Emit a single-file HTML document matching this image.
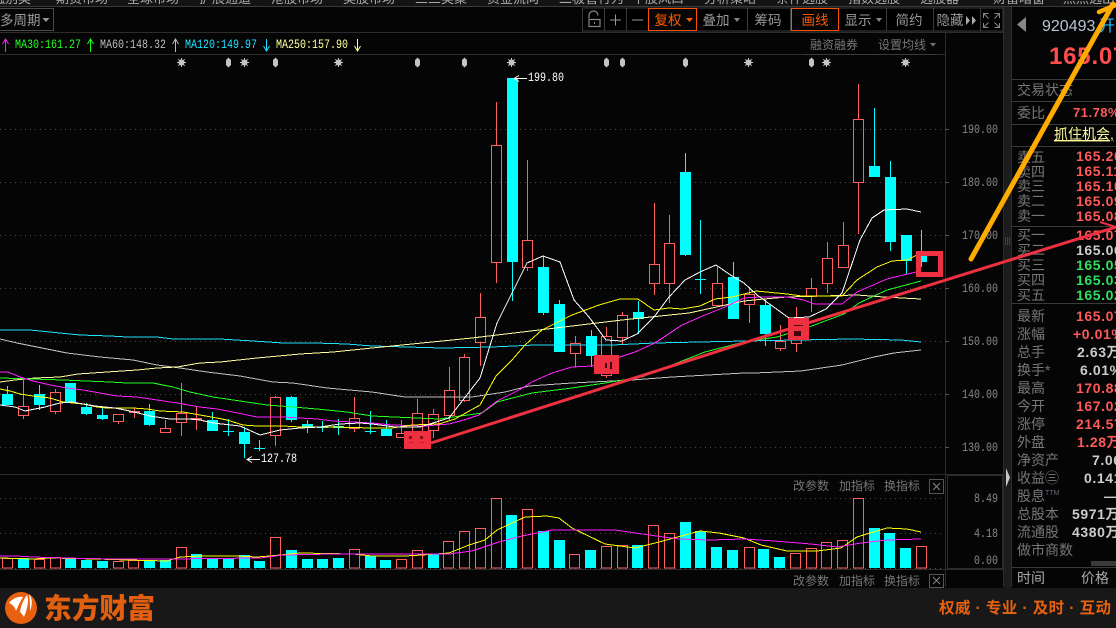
<!DOCTYPE html>
<html lang="zh"><head><meta charset="utf-8"><title>K线</title>
<style>
html,body{margin:0;padding:0;background:#050505;width:1116px;height:628px;overflow:hidden}
svg{display:block}
text{font-family:"Liberation Sans","Noto Sans CJK SC",sans-serif;fill:#888}
.m{font-family:"Liberation Mono","Noto Sans CJK SC",monospace;font-size:13px}
.c{font-size:12px;fill:#777}
.b{font-size:13.5px;fill:#999;text-anchor:middle}
.l{font-size:14px;fill:#777}
.v{font-size:14px;font-weight:bold;fill:#ff5a5a;letter-spacing:.6px}
.w{fill:#ccc}.g{fill:#2fe060}
.t{font-size:13px;fill:#aaa}
.ln{fill:none;stroke-width:1;shape-rendering:crispEdges}
.sep{stroke:#2c2c2c;stroke-width:1;shape-rendering:crispEdges}
.sep2{stroke:#3a3a3a;stroke-width:1;shape-rendering:crispEdges}
.grid{stroke:#4a4a4a;stroke-width:1;stroke-dasharray:1 4;shape-rendering:crispEdges}
</style></head><body>
<svg width="1116" height="628" viewBox="0 0 1116 628" xmlns="http://www.w3.org/2000/svg">
<rect width="1116" height="628" fill="#050505"/>
<!-- top menu strip -->
<rect width="1116" height="6" fill="#141414"/>
<g class="t">
<text x="-8" y="3" class="t">融别类</text><text x="56" y="3" class="t">期货市场</text><text x="127" y="3" class="t">全球市场</text><text x="199" y="3" class="t">扩展通道</text><text x="271" y="3" class="t">港股市场</text><text x="343" y="3" class="t">美股市场</text><text x="415" y="3" class="t">三三类聚</text><text x="487" y="3" class="t">资金流向</text><text x="559" y="3" class="t">二极管行为</text><text x="632" y="3" class="t">个股风口</text><text x="704" y="3" class="t">分析策略</text><text x="776" y="3" class="t">条件选股</text><text x="848" y="3" class="t">指数选股</text><text x="920" y="3" class="t">选股器</text><text x="993" y="3" class="t">财富暗窗</text><text x="1063" y="3" class="t">点点选出</text>
</g>
<path class="sep2" d="M0 6.5H1116"/>
<!-- chart frame -->
<path class="sep" d="M0 32.5H1003M0 54.5H945M945.5 33V587M1003.5 7V587M1011.5 7V587M0 474.5H1003M0 569.5H1003"/>
<rect x="1004" y="7" width="7" height="581" fill="#1c1c1c"/>
<rect x="947.500" y="475.500" width="55" height="93" fill="none" stroke="#2c2c2c" shape-rendering="crispEdges"/>
<path d="M1006 468L1010 477.500L1006 487z" fill="#c8c8c8"/>
<path d="M1005 238h6M1005 240h6M1005 242h6M1005 244h6" stroke="#666" stroke-dasharray="1 1" shape-rendering="crispEdges"/>
<!-- toolbar -->
<rect x="-2" y="8.500" width="55.500" height="22" fill="none" stroke="#4a4a4a" shape-rendering="crispEdges"/>
<text x="0" y="25" style="font-size:13.500px;fill:#999">多周期</text>
<path d="M42.500 18h7l-3.500 4z" fill="#999"/>
<path class="sep2" d="M582.500 8V31H1003V8H582.500M604.500 8V31M626.500 8V31M747.500 8V31M790.500 8V31M886.500 8V31M933.500 8V31M980.500 8V31"/>
<!-- lock -->
<path d="M589 18.500v-3a4.500 4.500 0 0 1 9 0" fill="none" stroke="#888" stroke-width="1.200"/>
<rect x="589" y="19.500" width="11" height="7" fill="none" stroke="#888" stroke-width="1.200"/>
<path d="M594.500 22v2" stroke="#888"/>
<path d="M610 20h11M615.500 14.500v11M632 20h11" stroke="#999" fill="none" shape-rendering="crispEdges"/>
<rect x="648.500" y="8.500" width="48" height="22" fill="#050505" stroke="#ff5000" shape-rendering="crispEdges"/>
<text x="668" y="25" class="b" style="fill:#ff5a00">复权</text>
<path d="M686 18h7l-3.500 4z" fill="#ff5a00"/>
<text x="716" y="25" class="b">叠加</text><path d="M734 18h6l-3 4z" fill="#888"/>
<text x="768" y="25" class="b">筹码</text>
<rect x="791.500" y="8.500" width="47" height="22" fill="#050505" stroke="#ff5000" shape-rendering="crispEdges"/>
<text x="815" y="25" class="b" style="fill:#ff5a00">画线</text>
<text x="858" y="25" class="b">显示</text><path d="M876 18h6l-3 4z" fill="#888"/>
<text x="909" y="25" class="b">简约</text>
<text x="950" y="25" class="b">隐藏</text>
<path d="M966 16v9l4-4.500zM972 16v9l4-4.500z" fill="#aaa"/>
<path d="M985 18v-4.500h5M1001 18v-4.500h-5M985 23v4.500h5M1001 23v4.500h-5M985 13.500l5 5M1001 13.500l-5 5M985 27.500l5-5M1001 27.500l-5-5" fill="none" stroke="#888" transform="translate(-1.500 0)"/>
<!-- legend -->
<path d="M5.500 52V39M2.500 44l3-5 3 5" stroke="#ff20ff" fill="none"/>
<text x="15" y="48" class="m" textLength="66" lengthAdjust="spacingAndGlyphs" style="fill:#20ff20">MA30:161.27</text>
<path d="M90.500 52V39M87.500 44l3-5 3 5" stroke="#20ff20" fill="none"/>
<text x="100" y="48" class="m" textLength="66" lengthAdjust="spacingAndGlyphs" style="fill:#bbb">MA60:148.32</text>
<path d="M175.500 52V39M172.500 44l3-5 3 5" stroke="#bbb" fill="none"/>
<text x="185" y="48" class="m" textLength="72" lengthAdjust="spacingAndGlyphs" style="fill:#20e0ff">MA120:149.97</text>
<path d="M266.500 39V51M263.500 46l3 5 3-5" stroke="#20e0ff" fill="none"/>
<text x="276" y="48" class="m" textLength="72" lengthAdjust="spacingAndGlyphs" style="fill:#ffffa0">MA250:157.90</text>
<path d="M357.500 39V51M354.500 46l3 5 3-5" stroke="#ffffa0" fill="none"/>
<text x="810" y="49" class="c">融资融券</text>
<text x="878" y="49" class="c">设置均线</text>
<path d="M930 43h6l-3 3.500z" fill="#777"/>
<path class="sep2" d="M802 54.500H936"/>
<!-- star markers -->
<g fill="#c4c4c4">
<g><circle cx="181.500" cy="62.500" r="3"/><path d="M181.500 58v9M177 62.500h9M178.300 59.300l6.400 6.400M184.700 59.300l-6.400 6.400" stroke="#c4c4c4" stroke-width="1"/></g>
<g><circle cx="244.500" cy="62.500" r="3"/><path d="M244.500 58v9M240 62.500h9M241.300 59.300l6.400 6.400M247.700 59.300l-6.400 6.400" stroke="#c4c4c4"/></g>
<g><circle cx="338.500" cy="62.500" r="3"/><path d="M338.500 58v9M334 62.500h9M335.300 59.300l6.400 6.400M341.700 59.300l-6.400 6.400" stroke="#c4c4c4"/></g>
<g><circle cx="511.500" cy="62.500" r="3"/><path d="M511.500 58v9M507 62.500h9M508.300 59.300l6.400 6.400M514.700 59.300l-6.400 6.400" stroke="#c4c4c4"/></g>
<g><circle cx="748.500" cy="62.500" r="3"/><path d="M748.500 58v9M744 62.500h9M745.300 59.300l6.400 6.400M751.700 59.300l-6.400 6.400" stroke="#c4c4c4"/></g>
<g><circle cx="826.500" cy="62.500" r="3"/><path d="M826.500 58v9M822 62.500h9M823.300 59.300l6.400 6.400M829.700 59.300l-6.400 6.400" stroke="#c4c4c4"/></g>
<g><circle cx="905.500" cy="62.500" r="3"/><path d="M905.500 58v9M901 62.500h9M902.300 59.300l6.400 6.400M908.700 59.300l-6.400 6.400" stroke="#c4c4c4"/></g>
<path d="M226 60l2.500-2.500 2.500 2.500v5l-2.500 2.500-2.500-2.500zM273 60l2.500-2.500 2.500 2.500v5l-2.500 2.500-2.500-2.500zM415 60l2.500-2.500 2.500 2.500v5l-2.500 2.500-2.500-2.500zM462 60l2.500-2.500 2.500 2.500v5l-2.500 2.500-2.500-2.500zM604 60l2.500-2.500 2.500 2.500v5l-2.500 2.500-2.500-2.500zM620 60l2.500-2.500 2.500 2.500v5l-2.500 2.500-2.500-2.500zM683 60l2.500-2.500 2.500 2.500v5l-2.500 2.500-2.500-2.500zM809 60l2.500-2.500 2.500 2.500v5l-2.500 2.500-2.500-2.500z"/>
</g>
<!-- grid -->
<path class="grid" d="M0 129.500H945M0 182.500H945M0 235.500H945M0 288.500H945M0 341.500H945M0 394.500H945M0 447.500H945M0 498.500H945M0 533.500H945M0 568.500H945"/>
<path d="M945 129.500h4M945 182.500h4M945 235.500h4M945 288.500h4M945 341.500h4M945 394.500h4M945 447.500h4" stroke="#555" shape-rendering="crispEdges"/>
<!-- axis -->
<g style="fill:#888">
<text x="962" y="133" class="m" textLength="36" lengthAdjust="spacingAndGlyphs">190.00</text>
<text x="962" y="186" class="m" textLength="36" lengthAdjust="spacingAndGlyphs">180.00</text>
<text x="962" y="239" class="m" textLength="36" lengthAdjust="spacingAndGlyphs">170.00</text>
<text x="962" y="292" class="m" textLength="36" lengthAdjust="spacingAndGlyphs">160.00</text>
<text x="962" y="345" class="m" textLength="36" lengthAdjust="spacingAndGlyphs">150.00</text>
<text x="962" y="398" class="m" textLength="36" lengthAdjust="spacingAndGlyphs">140.00</text>
<text x="962" y="451" class="m" textLength="36" lengthAdjust="spacingAndGlyphs">130.00</text>
<text x="974" y="502" class="m" textLength="24" lengthAdjust="spacingAndGlyphs">8.49</text>
<text x="974" y="537" class="m" textLength="24" lengthAdjust="spacingAndGlyphs">4.18</text>
<text x="974" y="564" class="m" textLength="24" lengthAdjust="spacingAndGlyphs">0.00</text>
</g>
<!-- volume -->
<path fill="#00ffff" d="M18 558h11v10h-11zM65 559h11v9h-11zM81 560h11v8h-11zM97 561h11v7h-11zM144 561h11v7h-11zM160 560h11v8h-11zM191 554h11v14h-11zM207 559h11v9h-11zM223 559h11v9h-11zM239 555h11v13h-11zM254 561h11v7h-11zM286 550h11v18h-11zM302 559h11v9h-11zM317 559h11v9h-11zM333 558h11v10h-11zM365 556h11v12h-11zM380 560h11v8h-11zM428 554h11v14h-11zM506 515h11v53h-11zM538 531h11v37h-11zM554 540h11v28h-11zM585 550h11v18h-11zM632 545h11v23h-11zM680 522h11v46h-11zM695 531h11v37h-11zM711 547h11v21h-11zM727 550h11v18h-11zM758 549h11v19h-11zM774 557h11v11h-11zM869 528h11v40h-11zM884 533h11v35h-11zM900 548h11v20h-11z"/>
<path class="ln" stroke="#ff5f5f" d="M2.500 558.500h10V568h-10zM34.500 559.500h10V568h-10zM50.500 557.500h10V568h-10zM113.500 561.500h10V568h-10zM128.500 560.500h10V568h-10zM176.500 547.500h10V568h-10zM270.500 537.500h10V568h-10zM349.500 549.500h10V568h-10zM396.500 559.500h10V568h-10zM412.500 550.500h10V568h-10zM443.500 541.500h10V568h-10zM459.500 531.500h10V568h-10zM475.500 528.500h10V568h-10zM491.500 498.500h10V568h-10zM522.500 509.500h10V568h-10zM569.500 554.500h10V568h-10zM601.500 546.500h10V568h-10zM617.500 545.500h10V568h-10zM648.500 525.500h10V568h-10zM664.500 533.500h10V568h-10zM744.500 547.500h10V568h-10zM790.500 553.500h10V568h-10zM806.500 548.500h10V568h-10zM821.500 542.500h10V568h-10zM837.500 540.500h10V568h-10zM853.500 498.500h10V568h-10zM916.500 546.500h10V568h-10z"/>
<polyline class="ln" stroke="#ffff00" points="0,558 33,559 50,558 97,559 127,560 167,561 180,557 200,556 237,556 257,557 270,556 300,553 353,554 372,556 405,556 422,555 449,553 469,545 485,540 497,530 525,517 547,516 559,518 572,528 605,544 635,548 659,542 685,535 700,531 719,533 744,538 761,545 787,551 817,551 841,548 857,537 887,528 907,529 921,532"/>
<polyline class="ln" stroke="#ff20ff" points="0,556 16,556 33,557 63,558 113,559 167,559 260,558 283,555 333,554 372,554 449,554 472,551 499,542 522,536 552,530 615,530 649,535 679,539 709,540 744,539 774,541 811,544 837,547 861,543 887,540 921,539"/>
<!-- candles -->
<path fill="#00ffff" d="M2 394h11v11h-11zM34 394h11v11h-11zM65 383h11v19h-11zM81 407h11v7h-11zM97 415h11v4h-11zM144 411h11v14h-11zM207 420h11v11h-11zM239 432h11v12h-11zM286 397h11v23h-11zM302 424h11v3h-11zM333 426h11v2h-11zM381 429h11v7h-11zM507 78h11v184h-11zM538 267h11v46h-11zM554 304h11v48h-11zM586 336h11v20h-11zM633 312h11v7h-11zM680 172h11v83h-11zM728 277h11v42h-11zM760 305h11v29h-11zM869 166h11v11h-11zM885 177h11v65h-11zM901 235h11v26h-11zM916 256h11v6h-11z"/>
<path class="ln" stroke="#00ffff" d="M7.500 386V394M39.500 385V410M70.500 402V403M86.500 403V415M102.500 408V420M149.500 404V426M212.500 412V431M228.500 419V436M223 431.500H234M244.500 427V458M259.500 440V451M254 448.500H265M291.500 396V422M307.500 420V433M322.500 421V432M317 427.500H328M338.500 419V435M370.500 411V434M365 431.500H376M386.500 420V429M512.500 262V301M543.500 256V315M559.500 300V304M591.500 330V367M638.500 301V334M685.500 153V256M700.500 220V294M695 279.500H706M733.500 262V277M765.500 300V346M874.500 108V166M890.500 161V251M906.500 261V274M921.500 230V267"/>
<path class="ln" stroke="#ff5f5f" d="M18.500 406.500h10v9h-10zM23.500 380V406M23.500 416V419M50.500 392.500h10v19h-10zM55.500 389V392M55.500 412V414M113.500 414.500h10v7h-10zM118.500 422V424M129.500 411.500h10v1h-10zM134.500 408V411M134.500 413V418M160.500 428.500h10v4h-10zM165.500 420V428M176.500 413.500h10v9h-10zM181.500 383V413M181.500 423V436M191.500 418.500h10v1h-10zM196.500 407V418M196.500 420V430M270.500 397.500h10v38h-10zM275.500 396V397M275.500 436V446M349.500 418.500h10v10h-10zM354.500 397V418M354.500 429V432M396.500 433.500h10v4h-10zM401.500 420V433M412.500 413.500h10v19h-10zM417.500 399V413M417.500 433V440M428.500 414.500h10v16h-10zM433.500 409V414M433.500 431V438M444.500 390.500h10v25h-10zM449.500 367V390M449.500 416V420M459.500 357.500h10v43h-10zM464.500 354V357M464.500 401V402M475.500 317.500h10v25h-10zM480.500 293V317M480.500 343V366M491.500 145.500h10v117h-10zM496.500 102V145M496.500 263V283M522.500 240.500h10v27h-10zM527.500 160V240M527.500 268V271M570.500 343.500h10v10h-10zM575.500 336V343M575.500 354V367M601.500 336.500h10v39h-10zM606.500 327V336M606.500 376V378M617.500 315.500h10v22h-10zM622.500 312V315M622.500 338V344M649.500 264.500h10v19h-10zM654.500 203V264M654.500 284V295M664.500 243.500h10v40h-10zM669.500 215V243M669.500 284V303M712.500 283.500h10v22h-10zM717.500 267V283M744.500 294.500h10v10h-10zM749.500 287V294M749.500 305V323M775.500 341.500h10v7h-10zM780.500 325V341M780.500 349V351M791.500 320.500h10v23h-10zM796.500 307V320M796.500 344V352M806.500 288.500h10v8h-10zM811.500 278V288M811.500 297V312M822.500 258.500h10v25h-10zM827.500 242V258M827.500 284V293M838.500 245.500h10v22h-10zM843.500 222V245M853.500 119.500h10v63h-10zM858.500 84V119M858.500 183V234"/>
<!-- MA lines -->
<polyline class="ln" stroke="#20e0ff" points="0,330 30,330 60,333 80,335 110,336 127,337 157,337 173,339 220,339 253,341 283,343 315,343 347,344 372,346 442,348 492,347 535,345 612,345 655,343 744,341 851,339 901,340 921,342"/>
<polyline class="ln" stroke="#c0c0c0" points="0,339 17,343 37,347 67,353 100,357 133,360 157,365 180,368 207,372 240,376 273,382 293,383 327,388 372,392 405,397 472,397 505,392 529,386 572,383 632,380 672,377 744,373 754,373 801,371 842,365 874,357 894,353 921,350"/>
<polyline class="ln" stroke="#ffffa0" points="0,382 15,380 35,378 60,377 78,374 107,372 137,370 157,368 177,367 200,363 220,362 257,358 300,354 333,352 372,348 422,343 472,338 539,330 622,320 689,313 744,301 764,299 787,297 857,295 884,297 921,299"/>
<polyline class="ln" stroke="#20ff20" points="0,378 33,379 63,380 110,382 127,383 153,383 173,387 190,392 213,397 240,401 267,405 293,407 317,409 347,412 372,416 439,419 482,413 497,402 532,393 572,388 605,383 642,377 672,365 705,352 744,342 777,337 809,327 844,314 859,303 887,290 921,281"/>
<polyline class="ln" stroke="#ff20ff" points="0,372 8,372 20,377 33,381 50,385 67,388 83,390 100,393 117,396 137,397 157,400 177,403 200,407 217,409 233,412 257,417 283,417 317,419 333,421 372,423 392,425 425,426 449,424 467,419 479,415 497,401 519,390 532,382 552,373 572,367 592,366 605,362 635,352 655,343 682,325 705,315 725,307 744,298 761,297 787,297 804,300 814,304 842,304 857,292 887,279 916,272"/>
<polyline class="ln" stroke="#ffff00" points="0,389 10,391 20,394 33,396 50,398 63,402 83,404 97,407 107,408 133,408 147,409 160,411 183,412 200,415 217,418 227,420 243,425 257,426 283,426 300,427 333,427 372,428 392,428 412,425 439,424 455,419 480,405 496,376 512,360 525,345 542,330 572,315 599,305 620,299 638,299 654,310 669,308 682,309 700,306 715,299 732,297 756,291 787,294 802,296 842,296 857,280 877,267 892,261 907,260 921,253"/>
<polyline class="ln" stroke="#ffffff" points="0,405 15,407 25,411 45,407 60,403 72,402 95,406 115,408 130,411 150,416 170,419 190,419 200,420 213,423 240,426 260,435 280,430 300,428 320,427 340,424 360,423 372,424 395,427 420,427 449,418 480,378 497,323 510,297 527,263 543,256 560,262 574,300 589,317 606,340 622,341 637,334 654,317 669,297 685,280 700,272 716,265 732,276 744,283 757,295 789,318 809,317 826,309 842,293 860,240 872,218 884,210 907,209 921,212"/>
<!-- hi/lo -->
<path d="M527 78.500H515M519 75.500l-5 3 5 3" stroke="#fff" fill="none"/>
<text x="528" y="81" class="m" textLength="36" lengthAdjust="spacingAndGlyphs" style="fill:#fff">199.80</text>
<path d="M260 459.500H248M252 456.500l-5 3 5 3" stroke="#fff" fill="none"/>
<text x="261" y="462" class="m" textLength="36" lengthAdjust="spacingAndGlyphs" style="fill:#fff">127.78</text>
<!-- indicator labels -->
<text x="793" y="490" class="c">改参数</text><text x="839" y="490" class="c">加指标</text><text x="884" y="490" class="c">换指标</text>
<rect x="929.500" y="479.500" width="14" height="14" fill="none" stroke="#555" shape-rendering="crispEdges"/><path d="M933 483l7 7M940 483l-7 7" stroke="#888"/>
<text x="793" y="585" class="c">改参数</text><text x="839" y="585" class="c">加指标</text><text x="884" y="585" class="c">换指标</text>
<rect x="929.500" y="574.500" width="14" height="13" fill="none" stroke="#555" shape-rendering="crispEdges"/><path d="M933 577l7 7M940 577l-7 7" stroke="#888"/>
<!-- right panel -->
<path d="M1026 17v15l-9-7.500z" fill="#888"/>
<text x="1042" y="31" style="font-size:16px;fill:#b8c4d4">920493</text>
<text x="1099" y="31" style="font-size:16px;fill:#20c0ff">开</text>
<text x="1049" y="64" style="font-size:24px;font-weight:bold;fill:#ff4d4d;letter-spacing:.8px">165.07</text>
<path class="sep2" d="M1012 79.500H1116M1012 101.500H1116M1012 124.500H1116M1012 146.500H1116M1012 226.500H1116M1012 303.500H1116M1012 567.500H1116"/>
<text x="1017" y="95" class="l">交易状态</text>
<text x="1017" y="118" class="l">委比</text>
<text x="1073" y="117" style="font-size:13px;font-weight:bold;fill:#ff5a5a;letter-spacing:.5px">71.78%</text>
<text x="1054" y="139" style="font-size:14px;fill:#ffffa0;text-decoration:underline">抓住机会,</text>
<g>
<text x="1017" y="162" class="l">卖五</text><text x="1017" y="177" class="l">卖四</text><text x="1017" y="191" class="l">卖三</text><text x="1017" y="206" class="l">卖二</text><text x="1017" y="221" class="l">卖一</text>
<text x="1017" y="240" class="l">买一</text><text x="1017" y="255" class="l">买二</text><text x="1017" y="270" class="l">买三</text><text x="1017" y="285" class="l">买四</text><text x="1017" y="300" class="l">买五</text>
<text x="1017" y="321" class="l">最新</text><text x="1017" y="339" class="l">涨幅</text><text x="1017" y="357" class="l">总手</text><text x="1017" y="375" class="l">换手*</text><text x="1017" y="393" class="l">最高</text><text x="1017" y="411" class="l">今开</text><text x="1017" y="429" class="l">涨停</text><text x="1017" y="447" class="l">外盘</text><text x="1017" y="465" class="l">净资产</text><text x="1017" y="483" class="l">收益㊂</text><text x="1017" y="501" class="l">股息</text><text x="1017" y="519" class="l">总股本</text><text x="1017" y="537" class="l">流通股</text><text x="1017" y="555" class="l">做市商数</text>
</g>
<text x="1045" y="495" style="font-size:7px;fill:#667">TTM</text>
<text x="1076" y="161" class="v">165.20</text><text x="1076" y="176" class="v">165.11</text><text x="1076" y="191" class="v">165.10</text><text x="1076" y="206" class="v">165.09</text><text x="1076" y="221" class="v">165.08</text>
<text x="1076" y="240" class="v">165.07</text><text x="1076" y="255" class="v w">165.06</text><text x="1076" y="270" class="v g">165.05</text><text x="1076" y="285" class="v g">165.03</text><text x="1076" y="300" class="v g">165.02</text>
<text x="1076" y="321" class="v">165.07</text><text x="1073" y="339" class="v">+0.01%</text><text x="1077" y="357" class="v w">2.63万</text><text x="1080" y="375" class="v w">6.01%</text><text x="1076" y="393" class="v">170.88</text><text x="1076" y="411" class="v">167.02</text><text x="1076" y="429" class="v">214.57</text><text x="1077" y="447" class="v">1.28万</text><text x="1092" y="465" class="v w">7.06</text><text x="1084" y="483" class="v w">0.141</text><text x="1104" y="501" class="v w">—</text><text x="1072" y="519" class="v w">5971万</text><text x="1072" y="537" class="v w">4380万</text>
<rect x="1091" y="561" width="25" height="5" fill="#3a3a3a"/>
<text x="1017" y="583" style="font-size:14px;fill:#aaa">时间</text><text x="1081" y="583" style="font-size:14px;fill:#aaa">价格</text>
<!-- drawn overlays -->
<path d="M971 259L1113 4" stroke="#ffab00" stroke-width="5" stroke-linecap="round" fill="none"/>
<path d="M1099 12L1116 5" stroke="#ffab00" stroke-width="4.500" stroke-linecap="round" fill="none"/>
<path d="M431 443L750 341L1116 227" stroke="#ee3040" stroke-width="3" fill="none"/>
<path d="M1100 222L1116 227" stroke="#ee3040" stroke-width="2" fill="none"/>
<rect x="404" y="431" width="27" height="18" fill="#ee3040"/>
<path d="M409 436h3v3h-3zM420 436h3v3h-3z" fill="#80101a"/>
<path d="M409 442h4v1h-4zM420 442h4v1h-4z" fill="#c02030"/>
<rect x="594" y="355" width="25" height="19" fill="#ee3040"/>
<path d="M605 363h2v5h-2zM610 362h2v7h-2z" fill="#40060c"/>
<rect x="788" y="318" width="21" height="22" fill="#ee3040"/>
<path d="M794 325h9v1h-9zM794 331h7v5h-7z" fill="#40060c"/>
<rect x="918.500" y="253.500" width="22" height="21" fill="none" stroke="#ee3040" stroke-width="5"/>
<!-- bottom bar -->
<rect x="0" y="588" width="1116" height="40" fill="#181818"/>
<circle cx="21" cy="608" r="16" fill="#e8610f"/>
<path d="M9 603C13 598 19 596 23 597C20 602 18 606 16 611C15 607 12 604 9 603zM20 612C21 605 24 599 27 595C29 600 28 607 24 617C23 615 21 613 20 612zM29 594C32 597 33 604 30 611C30 605 30 600 29 594z" fill="#fff"/>
<text x="44" y="618" style="font-size:28px;font-weight:900;font-family:'Noto Sans CJK SC',sans-serif;fill:#e35f10" textLength="111" lengthAdjust="spacingAndGlyphs">东方财富</text>
<text x="939" y="613" style="font-size:15.500px;font-weight:bold;fill:#e8610f" textLength="172" lengthAdjust="spacing">权威 · 专业 · 及时 · 互动</text>
</svg>
</body></html>
